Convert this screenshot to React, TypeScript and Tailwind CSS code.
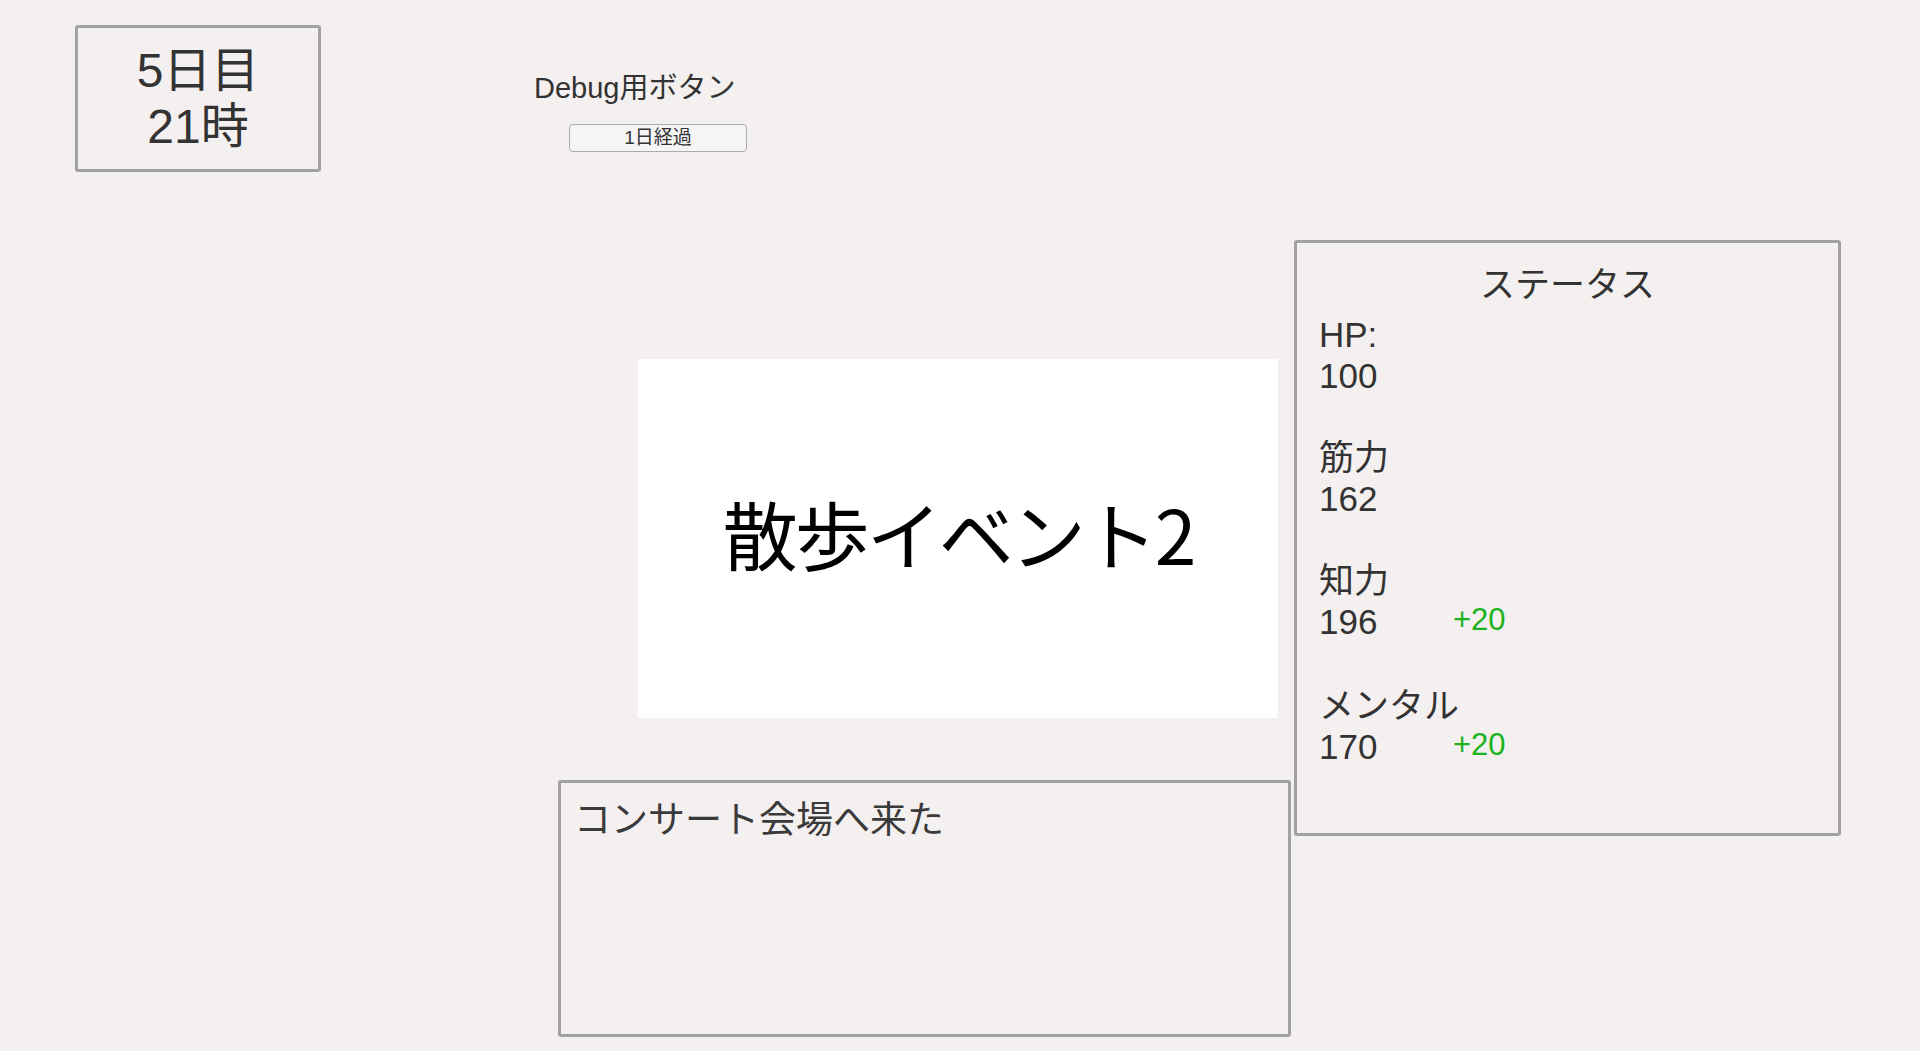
const latin = 'font-["Liberation_Sans","Noto_Sans_CJK_JP",sans-serif]';

interface Stat {
    label: string;
    value: number;
    bonus?: number;
}

const stats: Stat[] = [
    { label: 'HP:', value: 100 },
    { label: '筋力', value: 162 },
    { label: '知力', value: 196, bonus: 20 },
    { label: 'メンタル', value: 170, bonus: 20 },
];

function DayBox() {
    return (
        <div className="ml-[75px] w-[246px] h-[147px] border-[3px] border-[#a2a2a2] rounded-[3px] flex flex-col items-center justify-center text-[48px] leading-[56px] text-[#333333]">
            <div>5日目</div>
            <div>21時</div>
        </div>
    );
}

function DebugPanel() {
    return (
        <div className="ml-[213px] mt-[46px] flex flex-col">
            <div className="text-[29px] leading-[34px] text-[#333333]">Debug用ボタン</div>
            <button className="mt-[19px] ml-[35px] w-[178px] h-[28px] border border-[#ababab] rounded-[4px] bg-[#f5f5f5] text-[19px] leading-[26px] text-[#333333]">
                1日経過
            </button>
        </div>
    );
}

function StatusPanel() {
    return (
        <div className="ml-[3px] w-[547px] h-[596px] border-[3px] border-[#a2a2a2] rounded-[3px] pt-[21px] pl-[22px] text-[#333333]">
            <div className="text-center pr-[22px] text-[35px] leading-[41px]">ステータス</div>
            <div className="mt-[9px] text-[35px] leading-[41px]">
                {stats.map((s) => (
                    <div key={s.label} className="mb-[41px]">
                        <div>{s.label}</div>
                        <div className="flex items-baseline">
                            <span className="w-[134px]">{s.value}</span>
                            {s.bonus && (
                                <span className="text-[31px] text-[#1db31d] -translate-y-[4px]">+{s.bonus}</span>
                            )}
                        </div>
                    </div>
                ))}
            </div>
        </div>
    );
}

export default function App() {
    return (
        <div className={`w-full h-[1051px] bg-[#f5f0f0] overflow-hidden ${latin}`}>
            <div className="pt-[25px] flex items-start">
                <DayBox />
                <DebugPanel />
            </div>

            <div className="mt-[68px] pl-[558px] flex items-start">
                <div className="w-[733px] flex flex-col">
                    <div className="mt-[119px] ml-[80px] w-[640px] h-[359px] bg-white flex items-center justify-center pb-[12px]">
                        <span className='font-["Noto_Sans_CJK_JP",sans-serif] text-[75px] leading-none tracking-[-3px] text-black'>
                            散歩イベント2
                        </span>
                    </div>
                    <div className="mt-[62px] w-[733px] h-[257px] border-[3px] border-[#a2a2a2] rounded-[3px] pl-[13px] pt-[12px]">
                        <p className='font-["Noto_Sans_CJK_JP",sans-serif] text-[37px] leading-[44px] text-[#3a3a3a]'>
                            コンサート会場へ来た
                        </p>
                    </div>
                </div>
                <StatusPanel />
            </div>
        </div>
    );
}
